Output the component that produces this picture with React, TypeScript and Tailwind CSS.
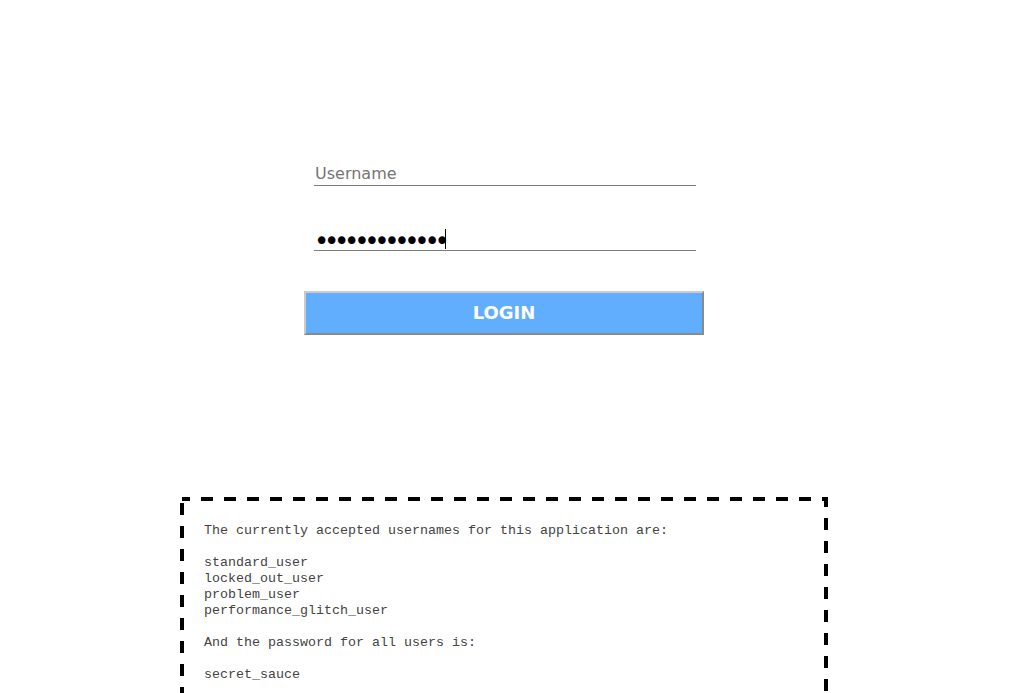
import React, { useState } from 'react';

const App: React.FC = () => {
  const [username, setUsername] = useState('');
  const [password, setPassword] = useState('secret_sauce1');

  return (
    <div className="min-h-[693px] bg-white overflow-hidden">
      <div className="w-[1008px] pt-[164px]">
        <div className="flex flex-col items-center">
          <input
            type="text"
            value={username}
            onChange={(e) => setUsername(e.target.value)}
            placeholder="Username"
            className="block ml-[2px] w-[382px] h-[22px] pl-[1px] pb-[1px] border-b border-[#7c7c7c] outline-none text-[16px] text-black placeholder:text-[#757575] font-['DejaVu_Sans',sans-serif]"
          />
          <div className="relative ml-[2px] mt-[42px]">
            <input
              type="password"
              value={password}
              onChange={(e) => setPassword(e.target.value)}
              className="block w-[382px] h-[23px] p-0 pt-[4px] border-b border-[#7c7c7c] outline-none text-[26px] leading-[22px] text-black tracking-[-5.3px] font-['DejaVu_Sans',sans-serif]"
            />
            <span className="absolute left-[131px] top-[1px] w-px h-[20px] bg-black" />
          </div>
          <button className="mt-[40px] w-[400px] h-[44px] bg-[#62aefe] border-2 border-t-[#cbcbcb] border-l-[#cbcbcb] border-r-[#8a8a8a] border-b-[#8a8a8a] text-white text-[18px] leading-[20px] pb-[1px] font-bold uppercase font-['DejaVu_Sans',sans-serif]">
            LOGIN
          </button>
        </div>

        <div className="relative mt-[162px] mx-auto w-[648px] h-[240px] px-[24px] pt-[26px] text-[13.33px] leading-[16px] text-[#444444] font-['Liberation_Mono','Courier_New',monospace] whitespace-pre">
          <svg className="absolute inset-0" width="648" height="240" viewBox="0 0 648 240">
            <rect x="2" y="2" width="644" height="236" fill="none" stroke="#000" strokeWidth="4" strokeDasharray="12 11" strokeDashoffset="4" />
          </svg>
          <p>The currently accepted usernames for this application are:</p>
          <p className="mt-[16px]">standard_user</p>
          <p>locked_out_user</p>
          <p>problem_user</p>
          <p>performance_glitch_user</p>
          <p className="mt-[16px]">And the password for all users is:</p>
          <p className="mt-[16px]">secret_sauce</p>
        </div>
      </div>
    </div>
  );
};

export default App;
